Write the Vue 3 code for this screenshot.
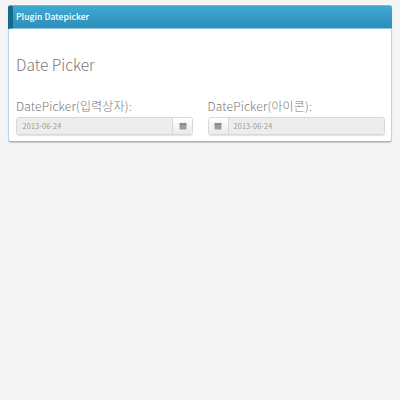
<script setup>
const fields = [
  { label: 'DatePicker', hint: '(입력상자):', value: '2013-06-24', side: 'right' },
  { label: 'DatePicker', hint: '(아이콘):', value: '2013-06-24', side: 'left' }
]
</script>

<template>
  <main class="page">
    <section class="panel">
      <header class="panel-header"><span>Plugin Datepicker</span></header>
      <div class="panel-body">
        <h1>Date Picker</h1>
        <div class="columns">
          <div v-for="field in fields" :key="field.side" class="field">
            <label>{{ field.label }}{{ field.hint }}</label>
            <div class="control" :class="field.side">
              <div class="value"><span>{{ field.value }}</span></div>
              <button type="button" aria-label="Calendar">
                <svg width="8" height="8" viewBox="0 0 8 8">
                  <path d="M.6 1.2h6.8v6.2H.6z" fill="#999" />
                  <path d="M.6 1.2h6.8v1.5H.6z" fill="#858585" />
                  <path d="M1.5.7h1v1h-1zM5.5.7h1v1h-1z" fill="#888" />
                  <path d="M.6 4.3h6.8M.6 5.9h6.8M2.4 3v4.2M4 3v4.2M5.7 3v4.2" stroke="#aaa" stroke-width=".25" />
                </svg>
              </button>
            </div>
          </div>
        </div>
      </div>
    </section>
  </main>
</template>

<style>
body { background: #f5f5f5; }
</style>

<style scoped>
* { box-sizing: border-box; }
.page {
  padding: 5px 8px;
  font-family: "Noto Sans CJK KR", sans-serif;
}
.panel {
  height: 137px;
  border-radius: 3px;
  background: #fff;
  border: 1px solid #bdd2f0;
  border-top: 0;
  border-bottom-color: #9db5dc;
  box-shadow: 0 1px 1px #c8c8c8;
}
.panel-header {
  height: 24px;
  margin: 0 -1px;
  padding-left: 3px;
  border-left: 5px solid #17698a;
  border-top: 1px solid #6fb9d8;
  border-bottom: 1px solid #91c6dd;
  border-radius: 3px 3px 0 0;
  background: linear-gradient(#40a9d2, #2b8fb9);
  color: #fff;
  font: 500 8.5px/21px "Noto Sans CJK KR", sans-serif;
  letter-spacing: .08px;
  white-space: nowrap;
}
.panel-body { padding: 24px 7px 0; }
h1 {
  margin: 0;
  color: #777;
  font: 300 15.5px/22px "Noto Sans CJK KR", sans-serif;
}
.columns {
  display: grid;
  grid-template-columns: 177px 177px;
  gap: 14.5px;
  margin-top: 23px;
}
label {
  display: block;
  height: 16px;
  color: #777;
  font: 300 12px/15px "Noto Sans CJK KR", sans-serif;
  letter-spacing: .17px;
  white-space: nowrap;
}
.control {
  display: flex;
  height: 18px;
  margin-top: 3px;
  border: 1px solid #d8d8d8;
  border-radius: 3px;
  overflow: hidden;
  box-shadow: 0 1px 1px #e1e1e1;
}
.left { flex-direction: row-reverse; }
.value {
  flex: 1;
  padding-left: 5.5px;
  background: #ededed;
  color: #999;
  font: 400 7.2px/16px "Noto Sans CJK KR", sans-serif;
  letter-spacing: .2px;
}
.left .value { padding-left: 5px; }
button {
  width: 20px;
  padding: 0;
  border: 0;
  display: flex;
  align-items: center;
  justify-content: center;
  background: linear-gradient(#fff, #ebebeb);
}
.right button { border-left: 1px solid #d8d8d8; }
.left button { border-right: 1px solid #d8d8d8; }
</style>
